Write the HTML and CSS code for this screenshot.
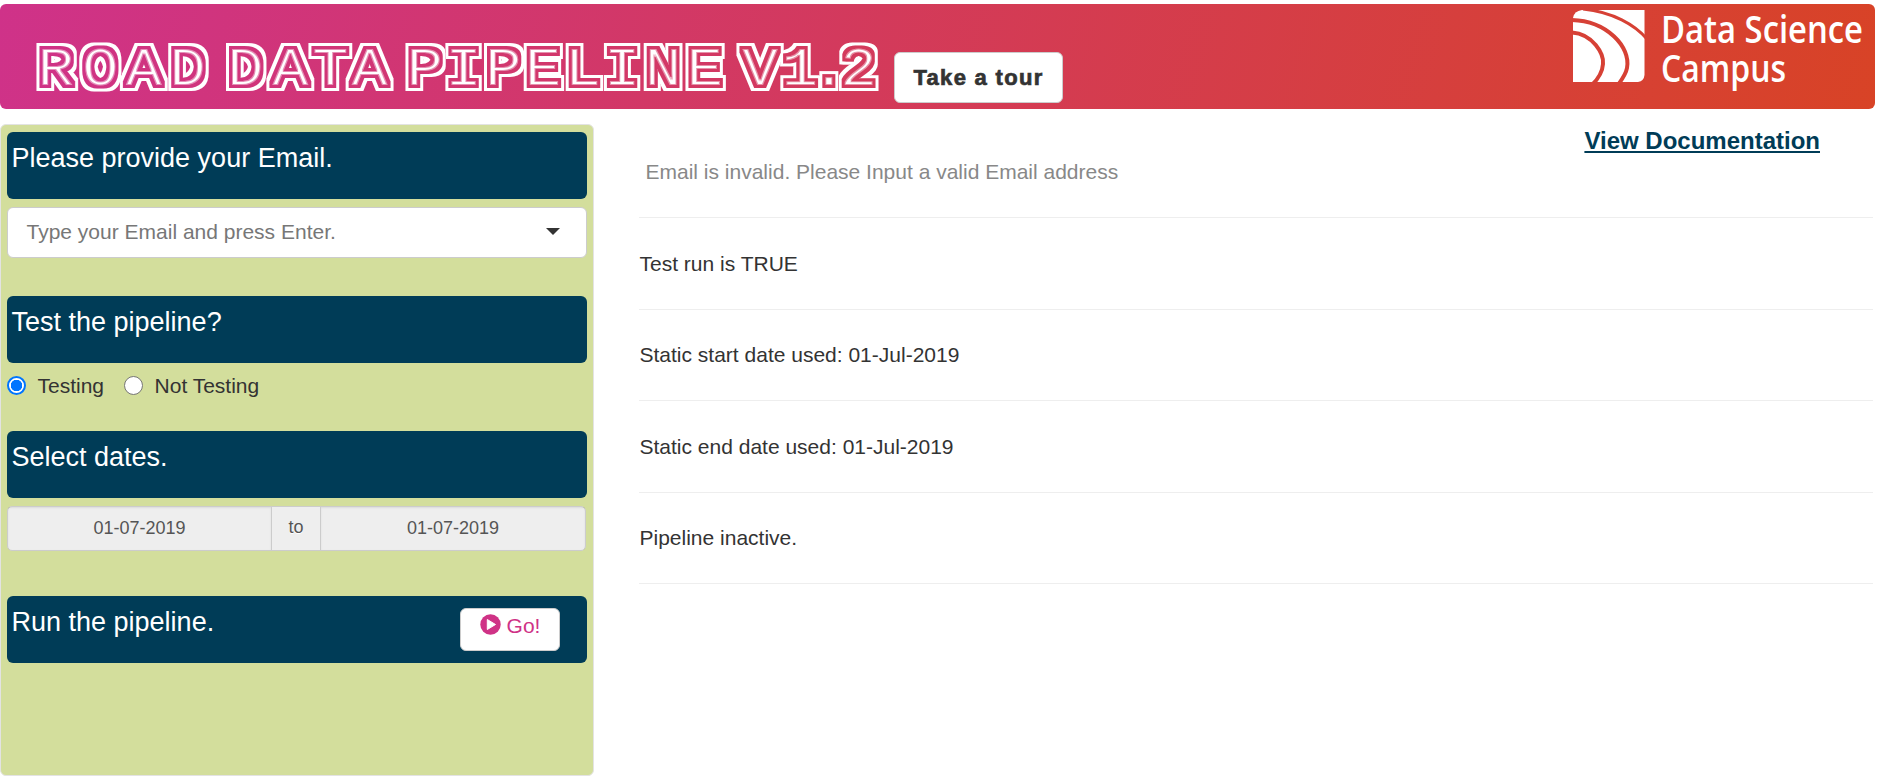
FILE: index.html
```html
<!DOCTYPE html>
<html lang="en"><head><meta charset="utf-8"><title>Road Data Pipeline</title><link rel="stylesheet" href="styles.css"></head>
<body>
<header class="banner">
  <svg class="title" width="880" height="105" viewBox="0 0 880 105" role="img">
    <defs>
      <filter id="inline" x="0" y="0" width="880" height="105" filterUnits="userSpaceOnUse" color-interpolation-filters="sRGB">
        <feMorphology in="SourceAlpha" operator="erode" radius="1" result="core"/>
        <feComponentTransfer in="SourceAlpha" result="soft"><feFuncA type="linear" slope=".45"/></feComponentTransfer>
        <feMorphology in="SourceAlpha" operator="dilate" radius="3" result="b"/>
        <feMorphology in="SourceAlpha" operator="dilate" radius="6" result="c"/>
        <feComposite in="c" in2="b" operator="out" result="outer"/>
        <feMerge result="m"><feMergeNode in="soft"/><feMergeNode in="core"/><feMergeNode in="outer"/></feMerge>
        <feFlood flood-color="#fff"/><feComposite in2="m" operator="in"/>
      </filter>
    </defs>
    <g filter="url(#inline)"><text class="title-text" transform="scale(1.06 .94)" text-anchor="middle" y="86.600" x="52.800 94.800 135.800 177 206 231.600 274 311.800 348.600 376 400.900 437.300 475 512.300 550 586.800 625.500 665 691 717 754.700 782 810">ROAD DATA PIPELINE V1.2</text></g>
  </svg>
  <button class="tour">Take a tour</button>
  <svg class="logo" width="300" height="90" viewBox="0 0 300 90">
    <defs><mask id="arcs"><rect width="72" height="72" fill="#fff"/><g fill="none" stroke="#000" stroke-width="4"><path d="M-1 22.5C20 24 31 44 30 54C29.500 62 26 68 19 75"/><path d="M-1 10C34 11 58 37 54 58C53 64 50 68 45 75"/><path d="M10-1C40 2 62 15 74 29" stroke-width="3"/></g></mask></defs>
    <path transform="translate(13 6)" mask="url(#arcs)" d="M9 0H71.500V65Q71 71 65 72H0V8Q1 1 9 0Z" fill="#fff"/>
    <text class="logo-text" x="101" y="39" textLength="202" lengthAdjust="spacingAndGlyphs">Data Science</text>
    <text class="logo-text" x="101" y="78" textLength="125" lengthAdjust="spacingAndGlyphs">Campus</text>
  </svg>
</header>
<div class="columns">
  <aside class="sidebar">
    <section class="step step-email"><h4 class="head">Please provide your Email.</h4>
      <div class="select"><span>Type your Email and press Enter.</span><i class="caret"></i></div></section>
    <section class="step step-test"><h4 class="head">Test the pipeline?</h4>
      <div class="radios"><label><i class="radio on"></i>Testing</label><label><i class="radio"></i>Not Testing</label></div></section>
    <section class="step step-dates"><h4 class="head">Select dates.</h4>
      <div class="dates"><span class="date first">01-07-2019</span><span class="to">to</span><span class="date">01-07-2019</span></div></section>
    <section class="step"><h4 class="head">Run the pipeline.<button class="go"><svg width="21" height="21" viewBox="0 0 21 21"><circle cx="10.5" cy="10.5" r="10.2" fill="#cf3286"/><path d="M7.3 5.5V15.5L15.5 10.5Z" fill="#fff" stroke="#fff" stroke-width="1" stroke-linejoin="round"/></svg>Go!</button></h4></section>
  </aside>
  <main class="output">
    <a class="docs" href="#">View Documentation</a>
    <p class="line muted">Email is invalid. Please Input a valid Email address</p>
    <p class="line">Test run is TRUE</p>
    <p class="line">Static start date used: 01-Jul-2019</p>
    <p class="line">Static end date used: 01-Jul-2019</p>
    <p class="line">Pipeline inactive.</p>
  </main>
</div>
</body></html>
```
FILE: styles.css
```css
*{box-sizing:border-box}
body{margin:0;padding-top:4px;height:781px;overflow:hidden;background:#fff;color:#333;font:21px/29px "Liberation Sans",Arial,sans-serif}
button{font-family:inherit;background:#fff;border:1px solid #ccc;border-radius:6px;padding:0}
.banner{width:1875px;height:105px;border-radius:6px;background:linear-gradient(105deg,#cf3289,#d84326);display:flex;align-items:flex-start}
.title{flex:none;width:880px}
.title-text{font:57px "Liberation Mono",monospace;fill:#fff}
.tour{width:169px;height:51px;margin:48px 0 0 14px;color:#333;font:bold 22px/48px "Liberation Sans",sans-serif;letter-spacing:1.3px;-webkit-text-stroke:.7px #333}
.logo{margin:0 15px 0 auto;overflow:visible}
.logo-text{font:600 38px "Open Sans",sans-serif;fill:#fff}
.columns{display:flex;margin-top:15px}
.sidebar{width:594px;height:652px;background:#d3de9c;border:1px solid #e3e3e3;border-radius:6px;padding:7px 6px}
.head{margin:0;height:67px;background:#003c57;color:#fff;border-radius:6px;font-weight:400;font-size:27px;line-height:30px;padding:11px 4.500px;display:flex;justify-content:space-between}
.step-email{height:164px}.step-test{height:135px}.step-dates{height:165px}
.select{margin-top:8px;width:580px;height:51px;background:#fff;border:1px solid #ccc;border-radius:6px;color:#777;display:flex;align-items:center;justify-content:space-between;padding:0 26px 2px 18.500px}
.caret{border:7px solid transparent;border-top-color:#333;border-bottom:0}
.radios{display:flex;gap:20px;padding-top:8px}
.radios label{display:flex;align-items:center}
.radio{width:19px;height:19px;border:1px solid #767676;border-radius:50%;background:#fff;margin-right:11.500px}
.radio.on{border:2px solid #0075ff;background:radial-gradient(#0075ff 0 5.5px,#fff 6px)}
.dates{margin-top:8px;width:579px;height:45px;border:1px solid #ccc;border-radius:5px;background:#eee;display:flex;color:#555;font-size:18px;line-height:43px;text-align:center}
.date{flex:1;box-shadow:inset 0 1px 2px rgba(0,0,0,.08)}
.first{flex:0 0 263px}
.to{width:50px;line-height:41px;border:solid #ccc;border-width:0 1px;text-shadow:0 1px 0 #fff}
.go{width:100px;height:43px;margin:1px 23px 0 0;color:#cf3286;font-size:21px;line-height:24px;display:flex;justify-content:center;gap:6px;padding:5px 0 0 1px}
.output{margin:0 6px 0 45px;flex:1;display:flex;flex-direction:column}
.docs{align-self:flex-end;margin:2px 53px -32px 0;height:30px;color:#003c57;font-weight:700;font-size:24px;line-height:30px}
.line{margin:0;height:91.600px;border-bottom:1px solid #eee;padding:30.500px 0 0 .5px}
.muted{padding:33px 0 0 6.500px;color:#888;height:94px}
```
